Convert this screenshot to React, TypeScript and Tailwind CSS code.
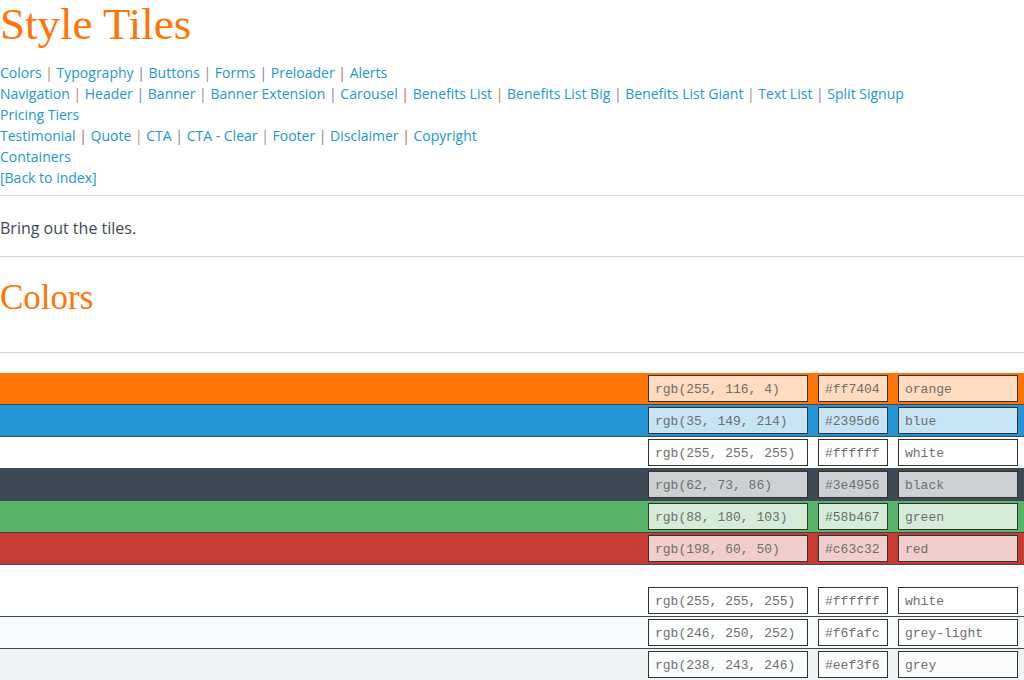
import React from 'react';

type Swatch = { rgb: string; hex: string; name: string; bg: string };

const NAV: string[][] = [
  ['Colors', 'Typography', 'Buttons', 'Forms', 'Preloader', 'Alerts'],
  [
    'Navigation',
    'Header',
    'Banner',
    'Banner Extension',
    'Carousel',
    'Benefits List',
    'Benefits List Big',
    'Benefits List Giant',
    'Text List',
    'Split Signup',
  ],
  ['Pricing Tiers'],
  ['Testimonial', 'Quote', 'CTA', 'CTA - Clear', 'Footer', 'Disclaimer', 'Copyright'],
  ['Containers'],
  ['[Back to index]'],
];

// separators come out tinted in the shot, keep them close
const SEP = ['text-[#d9823a]', 'text-[#7c76c4]', 'text-[#8a919c]', 'text-[#7c76c4]', 'text-[#c4574f]'];

const GROUPS: Swatch[][] = [
  [
    { rgb: 'rgb(255, 116, 4)', hex: '#ff7404', name: 'orange', bg: 'bg-[#ff7404]' },
    { rgb: 'rgb(35, 149, 214)', hex: '#2395d6', name: 'blue', bg: 'bg-[#2395d6]' },
    { rgb: 'rgb(255, 255, 255)', hex: '#ffffff', name: 'white', bg: 'bg-[#ffffff]' },
    { rgb: 'rgb(62, 73, 86)', hex: '#3e4956', name: 'black', bg: 'bg-[#3e4956]' },
    { rgb: 'rgb(88, 180, 103)', hex: '#58b467', name: 'green', bg: 'bg-[#58b467]' },
    { rgb: 'rgb(198, 60, 50)', hex: '#c63c32', name: 'red', bg: 'bg-[#c63c32]' },
  ],
  [
    { rgb: 'rgb(255, 255, 255)', hex: '#ffffff', name: 'white', bg: 'bg-[#ffffff]' },
    { rgb: 'rgb(246, 250, 252)', hex: '#f6fafc', name: 'grey-light', bg: 'bg-[#f6fafc]' },
    { rgb: 'rgb(238, 243, 246)', hex: '#eef3f6', name: 'grey', bg: 'bg-[#eef3f6]' },
  ],
];

function Field({ value, width }: { value: string; width: string }) {
  return (
    <div
      className={`${width} h-[27px] flex items-center px-[6px] pt-[2px] border border-[#333] bg-white/75 text-[13px] text-[#6e6e6e] whitespace-pre`}
      style={{ fontFamily: '"Liberation Mono", "Courier New", monospace' }}
    >
      {value}
    </div>
  );
}

function Row({ s }: { s: Swatch }) {
  return (
    <div className={`${s.bg} h-[32px] border-b border-[#3e4956] flex items-center justify-end gap-[10px] pr-[6px]`}>
      <Field value={s.rgb} width="w-[160px]" />
      <Field value={s.hex} width="w-[70px]" />
      <Field value={s.name} width="w-[120px]" />
    </div>
  );
}

export default function App() {
  let sepIdx = 0;
  return (
    <div className="w-full min-h-[680px] bg-white" style={{ fontFamily: '"Open Sans", "Liberation Sans", sans-serif' }}>
      <h1
        className="text-[45px] leading-[48px] text-[#ff7404] font-normal"
        style={{ fontFamily: '"Liberation Serif", "Times New Roman", serif' }}
      >
        Style Tiles
      </h1>

      <nav className="mt-[14px] pb-[7px] text-[14px] leading-[21px]">
        {NAV.map((line, li) => (
          <div key={li}>
            {line.map((item, i) => (
              <React.Fragment key={item}>
                {i > 0 && <span className={SEP[sepIdx++ % SEP.length]}> | </span>}
                <a href="#" className="text-[#2395d6]">
                  {item}
                </a>
              </React.Fragment>
            ))}
          </div>
        ))}
      </nav>

      <div className="border-t border-[#ccd5de] pt-[20px] pb-[16px]">
        <p className="text-[16px] leading-[24px] text-[#3e4956]">Bring out the tiles.</p>
      </div>

      <div className="border-t border-[#ccd5de] pt-[21px] pb-[34px]">
        <h2
          className="text-[35px] leading-[40px] text-[#ff7404] font-normal"
          style={{ fontFamily: '"Liberation Serif", "Times New Roman", serif' }}
        >
          Colors
        </h2>
      </div>

      <div className="border-t border-[#ccd5de]">
        {GROUPS.map((g, gi) => (
          <div key={gi} className="mt-[20px]">
            {g.map((s) => (
              <Row key={s.name + s.hex} s={s} />
            ))}
          </div>
        ))}
      </div>
    </div>
  );
}
